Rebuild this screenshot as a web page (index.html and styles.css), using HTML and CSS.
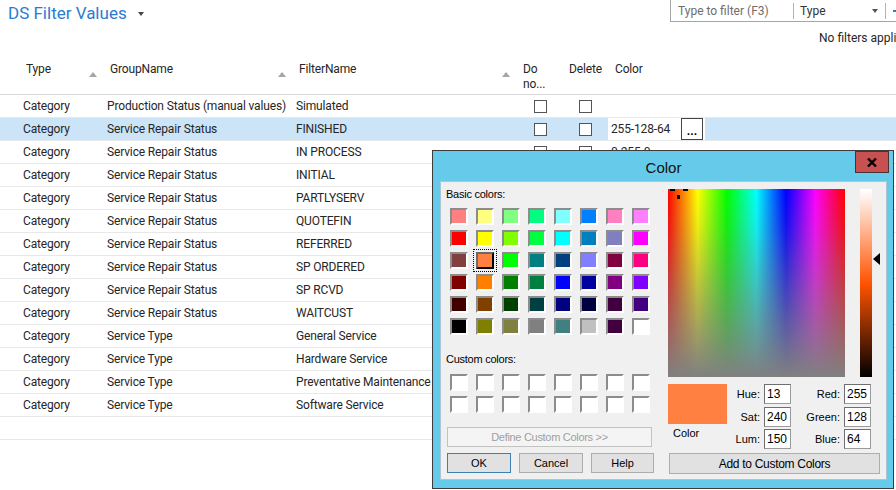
FILE: index.html
```html
<!DOCTYPE html>
<html lang="en">
<head>
<meta charset="utf-8">
<title>DS Filter Values</title>
<link rel="stylesheet" href="styles.css">
</head>
<body>
<header class="top">
  <h1 class="title">DS Filter Values <span class="title-caret"></span></h1>
  <div class="rightpanel">
    <div class="filterbox">
      <span class="fb-text">Type to filter (F3)</span>
      <span class="sep"></span>
      <span class="fb-field">Type<span class="fb-caret"></span></span>
      <span class="sep"></span>
      <span class="fb-more"></span>
    </div>
    <div class="status">No filters applied</div>
  </div>
</header>

<div class="grid">
  <div class="row head">
    <div></div>
    <div class="h"><span>Type</span><span class="sort"></span></div>
    <div class="h"><span>GroupName</span><span class="sort"></span></div>
    <div class="h h3"><span>FilterName</span><span class="sort"></span></div>
    <div class="h">Do<br>no...</div>
    <div class="h">Delete</div>
    <div class="h h6">Color</div>
  </div>
  <div class="row"><div></div><div class="c">Category</div><div class="c">Production Status (manual values)</div><div class="c">Simulated</div><div class="cbc"><span class="cb"></span></div><div class="cbc"><span class="cb"></span></div><div class="c"></div></div>
  <div class="row sel"><div></div><div class="c">Category</div><div class="c">Service Repair Status</div><div class="c">FINISHED</div><div class="cbc"><span class="cb"></span></div><div class="cbc"><span class="cb"></span></div><div class="colorcell"><span>255-128-64</span><span class="dots">...</span></div></div>
  <div class="row"><div></div><div class="c">Category</div><div class="c">Service Repair Status</div><div class="c">IN PROCESS</div><div class="cbc"><span class="cb"></span></div><div class="cbc"><span class="cb"></span></div><div class="c">0-255-0</div></div>
  <div class="row"><div></div><div class="c">Category</div><div class="c">Service Repair Status</div><div class="c">INITIAL</div><div class="cbc"><span class="cb"></span></div><div class="cbc"><span class="cb"></span></div><div class="c">0-0-255</div></div>
  <div class="row"><div></div><div class="c">Category</div><div class="c">Service Repair Status</div><div class="c">PARTLYSERV</div><div class="cbc"><span class="cb"></span></div><div class="cbc"><span class="cb"></span></div><div class="c"></div></div>
  <div class="row"><div></div><div class="c">Category</div><div class="c">Service Repair Status</div><div class="c">QUOTEFIN</div><div class="cbc"><span class="cb"></span></div><div class="cbc"><span class="cb"></span></div><div class="c"></div></div>
  <div class="row"><div></div><div class="c">Category</div><div class="c">Service Repair Status</div><div class="c">REFERRED</div><div class="cbc"><span class="cb"></span></div><div class="cbc"><span class="cb"></span></div><div class="c"></div></div>
  <div class="row"><div></div><div class="c">Category</div><div class="c">Service Repair Status</div><div class="c">SP ORDERED</div><div class="cbc"><span class="cb"></span></div><div class="cbc"><span class="cb"></span></div><div class="c"></div></div>
  <div class="row"><div></div><div class="c">Category</div><div class="c">Service Repair Status</div><div class="c">SP RCVD</div><div class="cbc"><span class="cb"></span></div><div class="cbc"><span class="cb"></span></div><div class="c"></div></div>
  <div class="row"><div></div><div class="c">Category</div><div class="c">Service Repair Status</div><div class="c">WAITCUST</div><div class="cbc"><span class="cb"></span></div><div class="cbc"><span class="cb"></span></div><div class="c"></div></div>
  <div class="row"><div></div><div class="c">Category</div><div class="c">Service Type</div><div class="c">General Service</div><div class="cbc"><span class="cb"></span></div><div class="cbc"><span class="cb"></span></div><div class="c"></div></div>
  <div class="row"><div></div><div class="c">Category</div><div class="c">Service Type</div><div class="c">Hardware Service</div><div class="cbc"><span class="cb"></span></div><div class="cbc"><span class="cb"></span></div><div class="c"></div></div>
  <div class="row"><div></div><div class="c">Category</div><div class="c">Service Type</div><div class="c">Preventative Maintenance</div><div class="cbc"><span class="cb"></span></div><div class="cbc"><span class="cb"></span></div><div class="c"></div></div>
  <div class="row"><div></div><div class="c">Category</div><div class="c">Service Type</div><div class="c">Software Service</div><div class="cbc"><span class="cb"></span></div><div class="cbc"><span class="cb"></span></div><div class="c"></div></div>
  <div class="row"><div></div><div></div><div></div><div></div><div></div><div></div><div></div></div>
</div>

<div class="dialog" role="dialog" aria-label="Color">
  <div class="dlg-bar">
    <span></span>
    <span class="dlg-title">Color</span>
    <span class="dlg-close"><svg width="10" height="9" viewBox="0 0 10 9"><path d="M1 0.5 L9 8.5 M9 0.5 L1 8.5" stroke="#000" stroke-width="2.4" fill="none"/></svg></span>
  </div>
  <div class="dlg-body">
    <div class="pane-left">
      <div class="lbl">Basic colors:</div>
      <div class="swatches">
        <span class="sw" style="background:#ff8080"></span><span class="sw" style="background:#ffff80"></span><span class="sw" style="background:#80ff80"></span><span class="sw" style="background:#00ff80"></span><span class="sw" style="background:#80ffff"></span><span class="sw" style="background:#0080ff"></span><span class="sw" style="background:#ff80c0"></span><span class="sw" style="background:#ff80ff"></span>
        <span class="sw" style="background:#ff0000"></span><span class="sw" style="background:#ffff00"></span><span class="sw" style="background:#80ff00"></span><span class="sw" style="background:#00ff40"></span><span class="sw" style="background:#00ffff"></span><span class="sw" style="background:#0080c0"></span><span class="sw" style="background:#8080c0"></span><span class="sw" style="background:#ff00ff"></span>
        <span class="sw" style="background:#804040"></span><span class="sw selected" style="background:#ff8040"></span><span class="sw" style="background:#00ff00"></span><span class="sw" style="background:#008080"></span><span class="sw" style="background:#004080"></span><span class="sw" style="background:#8080ff"></span><span class="sw" style="background:#800040"></span><span class="sw" style="background:#ff0080"></span>
        <span class="sw" style="background:#800000"></span><span class="sw" style="background:#ff8000"></span><span class="sw" style="background:#008000"></span><span class="sw" style="background:#008040"></span><span class="sw" style="background:#0000ff"></span><span class="sw" style="background:#0000a0"></span><span class="sw" style="background:#800080"></span><span class="sw" style="background:#8000ff"></span>
        <span class="sw" style="background:#400000"></span><span class="sw" style="background:#804000"></span><span class="sw" style="background:#004000"></span><span class="sw" style="background:#004040"></span><span class="sw" style="background:#000080"></span><span class="sw" style="background:#000040"></span><span class="sw" style="background:#400040"></span><span class="sw" style="background:#400080"></span>
        <span class="sw" style="background:#000000"></span><span class="sw" style="background:#808000"></span><span class="sw" style="background:#808040"></span><span class="sw" style="background:#808080"></span><span class="sw" style="background:#408080"></span><span class="sw" style="background:#c0c0c0"></span><span class="sw" style="background:#400040"></span><span class="sw" style="background:#ffffff"></span>
      </div>
      <div class="lbl lbl-custom">Custom colors:</div>
      <div class="swatches custom">
        <span class="sw"></span><span class="sw"></span><span class="sw"></span><span class="sw"></span><span class="sw"></span><span class="sw"></span><span class="sw"></span><span class="sw"></span>
        <span class="sw"></span><span class="sw"></span><span class="sw"></span><span class="sw"></span><span class="sw"></span><span class="sw"></span><span class="sw"></span><span class="sw"></span>
      </div>
      <button class="btn btn-define" disabled>Define Custom Colors &gt;&gt;</button>
      <div class="btnrow">
        <button class="btn btn-ok">OK</button>
        <button class="btn btn-cancel">Cancel</button>
        <button class="btn btn-help">Help</button>
      </div>
    </div>
    <div class="pane-right">
      <div class="picker">
        <div class="spectrum">
          <span class="ch ch-l"></span><span class="ch ch-r"></span><span class="ch ch-b"></span>
        </div>
        <div class="lumwrap">
          <div class="lum"></div>
          <span class="lum-arrow"></span>
        </div>
      </div>
      <div class="values">
        <div class="preview-col">
          <div class="preview"></div>
          <div class="preview-lbl">Color</div>
        </div>
        <div class="fields">
          <span class="flbl">Hue:</span><span class="fin">13</span><span class="flbl">Red:</span><span class="fin">255</span>
          <span class="flbl">Sat:</span><span class="fin">240</span><span class="flbl">Green:</span><span class="fin">128</span>
          <span class="flbl">Lum:</span><span class="fin">150</span><span class="flbl">Blue:</span><span class="fin">64</span>
        </div>
      </div>
      <button class="btn btn-add">Add to Custom Colors</button>
    </div>
  </div>
</div>
</body>
</html>
```
FILE: styles.css
```css
* { box-sizing: border-box; }
html, body { margin: 0; padding: 0; }
body {
  width: 896px;
  height: 490px;
  overflow: hidden;
  position: relative;
  background: #fff;
  font-family: Roboto, "Liberation Sans", sans-serif;
  font-size: 12px;
  color: #262626;
}

/* ---------- top bar ---------- */
.top { display: flex; align-items: flex-start; height: 58px; }
.title {
  margin: 0;
  padding-left: 8px;
  font-size: 17px;
  font-weight: 400;
  line-height: 26px;
  color: #2a7bd2;
  display: flex;
  align-items: center;
}
.title-caret {
  margin-left: 11px;
  margin-top: 1px;
  width: 0; height: 0;
  border-left: 3.5px solid transparent;
  border-right: 3.5px solid transparent;
  border-top: 4px solid #444;
}
.rightpanel { margin-left: auto; width: 226px; overflow: hidden; }
.filterbox {
  height: 22px;
  border-left: 1px solid #a6a6a6;
  border-bottom: 1px solid #a6a6a6;
  display: flex;
  align-items: center;
}
.fb-text { width: 122px; padding-left: 7px; color: #6e6e6e; line-height: 16px; white-space: nowrap; }
.sep { width: 1px; height: 16px; background: #b4b4b4; }
.fb-field { width: 91px; padding: 0 7px 0 6px; display: flex; align-items: center; color: #333; line-height: 16px; }
.fb-caret {
  margin-left: auto;
  width: 0; height: 0;
  border-left: 3px solid transparent;
  border-right: 3px solid transparent;
  border-top: 4px solid #555;
}
.fb-more { margin-left: 7px; width: 3px; height: 2px; background: #2a7bd2; }
.status { margin-top: 8px; padding-left: 149px; line-height: 16px; white-space: nowrap; color: #262626; }

/* ---------- list ---------- */
.grid { letter-spacing: -0.15px; }
.row {
  display: grid;
  grid-template-columns: 20px 84px 189px 224px 46px 45px 1fr;
  height: 23px;
  border-bottom: 1px solid #e8e8e8;
  align-items: center;
}
.row.head { height: 37px; align-items: start; border-bottom: 1px solid #d8d8d8; }
.h { display: flex; padding: 4px 7px 0 6px; line-height: 15px; white-space: nowrap; }
.h6 { padding-left: 7px; }
.sort {
  margin-left: auto;
  margin-top: 10px;
  width: 0; height: 0;
  border-left: 4.5px solid transparent;
  border-right: 4.5px solid transparent;
  border-bottom: 5px solid #a6a6a6;
}
.c { padding-left: 3px; white-space: nowrap; overflow: hidden; line-height: 16px; }
.cbc { display: flex; justify-content: center; }
.cb { width: 13px; height: 13px; border: 1px solid #555; background: #fff; }
.row.sel { background: #cce4f7; }
.colorcell {
  width: 97px;
  height: 22px;
  align-self: start;
  background: #fff;
  display: flex;
  align-items: center;
  padding: 0 2px 0 3px;
}
.dots {
  margin-left: auto;
  width: 22px;
  height: 22px;
  border: 1px solid #444;
  background: #fff;
  font-weight: 700;
  text-align: center;
  line-height: 24px;
  letter-spacing: 0;
  color: #000;
}

/* ---------- color dialog ---------- */
.dialog {
  position: absolute;
  left: 432px;
  top: 150px;
  width: 462px;
  height: 339px;
  border: 1px solid #3d3d3d;
  background: #66cbea;
  padding: 0 6px 8px 7px;
  display: flex;
  flex-direction: column;
  font-family: "Liberation Sans", Arial, sans-serif;
  font-size: 11px;
  color: #000;
}
.dlg-bar { height: 30px; display: grid; grid-template-columns: 1fr auto 1fr; align-items: center; }
.dlg-title { font-size: 15px; color: #111; padding-top: 2px; }
.dlg-close {
  justify-self: end;
  align-self: start;
  margin-right: -2px;
  width: 34px;
  height: 22px;
  background: #c75050;
  border: 1px solid #4a3333;
  display: flex;
  align-items: center;
  justify-content: center;
}
.dlg-body {
  flex: 1;
  background: #f0f0f0;
  border: 1px solid #a9c6d2;
  display: flex;
}
.pane-left { width: 219px; padding: 6px 0 0 5px; display: flex; flex-direction: column; align-items: flex-start; }
.lbl { line-height: 13px; letter-spacing: -0.25px; }
.lbl-custom { margin-top: 18px; }
.swatches {
  margin: 7px 0 0 4px;
  display: grid;
  grid-template-columns: repeat(8, 18px);
  grid-auto-rows: 17px;
  column-gap: 8px;
  row-gap: 5px;
}
.swatches.custom { margin-top: 8px; }
.sw {
  border: 2px solid;
  border-color: #8c8c8c #fff #fff #8c8c8c;
  background: #fff;
}
.sw.selected {
  border-color: #6a6a6a #000 #000 #6a6a6a;
  outline: 1px dotted #000;
  outline-offset: 2px;
}
.btn {
  font-family: "Liberation Sans", Arial, sans-serif;
  font-size: 11px;
  color: #000;
  background: #e1e1e1;
  border: 1px solid #adadad;
  height: 20px;
  padding: 0;
  margin: 0;
}
.btn-define {
  margin: 14px 0 0 1px;
  width: 205px;
  background: #f4f4f4;
  border-color: #c2c2c2;
  color: #a0a0a0;
  letter-spacing: -0.3px;
}
.btnrow { margin: 6px 0 0 1px; display: flex; gap: 8px; }
.btn-ok { width: 64px; border-color: #3c7fb1; }
.btn-cancel { width: 64px; }
.btn-help { width: 63px; }

.pane-right { padding: 7px 0 0 8px; display: flex; flex-direction: column; align-items: flex-start; }
.picker { display: flex; align-items: flex-start; }
.spectrum {
  position: relative;
  width: 177px;
  height: 188px;
  background:
    linear-gradient(to bottom, rgba(128,128,128,0) 0%, rgba(128,128,128,0.15) 20%, #808080 100%),
    linear-gradient(to right, #f00 0%, #ff0 16.67%, #0f0 33.33%, #0ff 50%, #00f 66.67%, #f0f 83.33%, #f00 100%);
}
.ch { position: absolute; background: #000; }
.ch-l { left: 2px; top: 0; width: 5px; height: 2px; }
.ch-r { left: 15px; top: 0; width: 5px; height: 2px; }
.ch-b { left: 9px; top: 6px; width: 3px; height: 4px; }
.lumwrap { position: relative; margin-left: 15px; width: 21px; height: 188px; }
.lum {
  width: 12px;
  height: 188px;
  border-top: 1px solid #fff;
  background: linear-gradient(to bottom, #fff 0%, #ff5300 50%, #000 100%);
}
.lum-arrow {
  position: absolute;
  left: 13px;
  top: 64px;
  width: 0; height: 0;
  border-right: 7px solid #000;
  border-top: 6.5px solid transparent;
  border-bottom: 6.5px solid transparent;
}
.values { margin-top: 7px; display: flex; align-items: flex-start; }
.preview-col { width: 59px; }
.preview { width: 59px; height: 40px; background: #ff8040; }
.preview-lbl { margin: 3px 0 0 5px; line-height: 13px; }
.fields {
  display: grid;
  grid-template-columns: 37px 27px 53px 27px;
  grid-auto-rows: 20px;
  row-gap: 2.5px;
}
.flbl { text-align: right; padding-right: 4px; line-height: 20px; }
.fin {
  background: #fff;
  border: 1px solid #6f6f6f;
  border-right-color: #9a9a9a;
  border-bottom-color: #9a9a9a;
  padding-left: 2px;
  line-height: 18px;
  font-size: 12px;
}
.btn-add { margin: 4px 0 0 1px; width: 211px; height: 21px; font-size: 12px; letter-spacing: -0.3px; }
```
